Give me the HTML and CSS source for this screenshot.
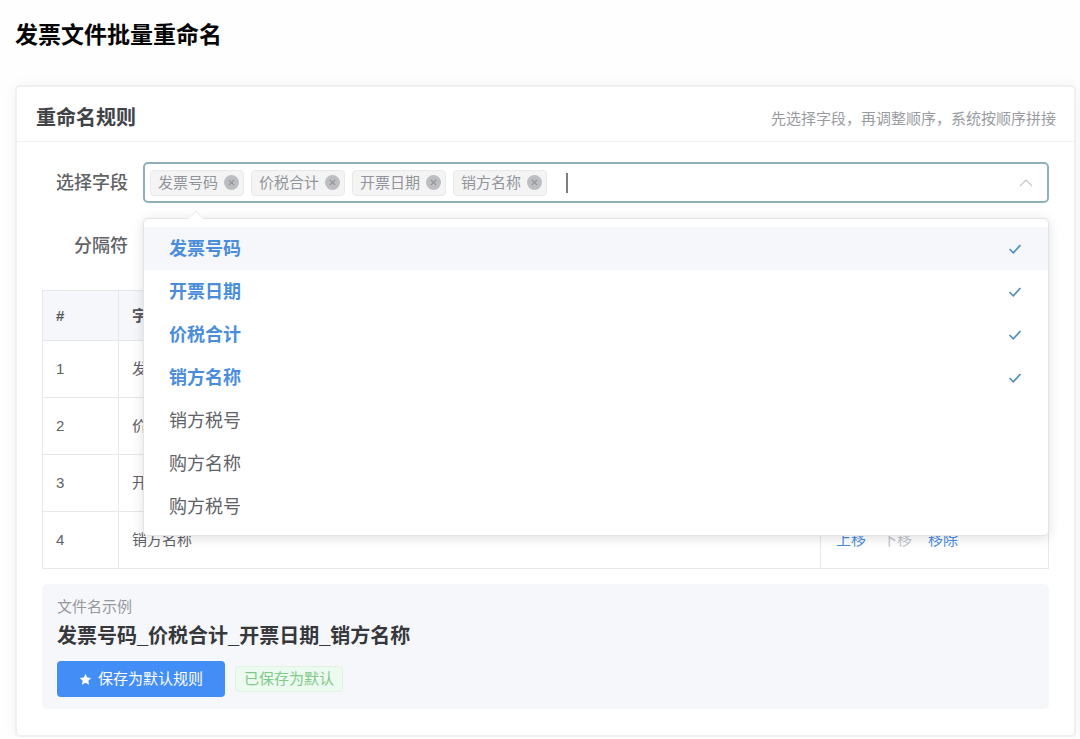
FILE: index.html
```html
<!DOCTYPE html>
<html lang="zh-CN">
<head>
<meta charset="utf-8">
<meta name="viewport" content="width=device-width, initial-scale=1">
<title>发票文件批量重命名</title>
<link rel="stylesheet" href="styles.css">
</head>
<body>
<main class="page">
  <h1 class="page-title">发票文件批量重命名</h1>
  <section class="card">
    <header class="card-header">
      <h2 class="card-title">重命名规则</h2>
      <p class="card-hint">先选择字段，再调整顺序，系统按顺序拼接</p>
    </header>
    <div class="card-body">
      <div class="form-row">
        <label class="form-label" for="fields">选择字段</label>
        <div class="field">
          <div class="select">
            <span class="tag">发票号码<button class="tag-close" type="button"><svg viewBox="0 0 14 14"><path d="M4.5 4.5l5 5M9.5 4.5l-5 5"/></svg></button></span>
            <span class="tag">价税合计<button class="tag-close" type="button"><svg viewBox="0 0 14 14"><path d="M4.5 4.5l5 5M9.5 4.5l-5 5"/></svg></button></span>
            <span class="tag">开票日期<button class="tag-close" type="button"><svg viewBox="0 0 14 14"><path d="M4.5 4.5l5 5M9.5 4.5l-5 5"/></svg></button></span>
            <span class="tag">销方名称<button class="tag-close" type="button"><svg viewBox="0 0 14 14"><path d="M4.5 4.5l5 5M9.5 4.5l-5 5"/></svg></button></span>
            <span class="caret"></span>
            <input class="select-input" id="fields" type="text" autocomplete="off">
            <svg class="chevron" viewBox="0 0 14 8"><path d="M1 7l6-6 6 6"/></svg>
          </div>
          <div class="dropdown">
            <ul class="options">
              <li class="option selected active">发票号码<svg class="check" viewBox="0 0 14 12"><path d="M1.5 6l3.8 3.8L12.5 2"/></svg></li>
              <li class="option selected">开票日期<svg class="check" viewBox="0 0 14 12"><path d="M1.5 6l3.8 3.8L12.5 2"/></svg></li>
              <li class="option selected">价税合计<svg class="check" viewBox="0 0 14 12"><path d="M1.5 6l3.8 3.8L12.5 2"/></svg></li>
              <li class="option selected">销方名称<svg class="check" viewBox="0 0 14 12"><path d="M1.5 6l3.8 3.8L12.5 2"/></svg></li>
              <li class="option">销方税号</li>
              <li class="option">购方名称</li>
              <li class="option">购方税号</li>
            </ul>
          </div>
        </div>
      </div>
      <div class="form-row">
        <label class="form-label" for="separator">分隔符</label>
        <div class="field"><input class="text-input" id="separator" type="text"></div>
      </div>
      <table class="table">
        <colgroup><col class="col-index"><col><col class="col-actions"></colgroup>
        <thead>
          <tr><th>#</th><th>字段</th><th></th></tr>
        </thead>
        <tbody>
          <tr><td>1</td><td>发票号码</td><td></td></tr>
          <tr><td>2</td><td>价税合计</td><td></td></tr>
          <tr><td>3</td><td>开票日期</td><td></td></tr>
          <tr><td>4</td><td>销方名称</td><td><div class="actions"><button class="link" type="button">上移</button><button class="link" type="button" disabled>下移</button><button class="link" type="button">移除</button></div></td></tr>
        </tbody>
      </table>
      <div class="preview">
        <p class="preview-label">文件名示例</p>
        <p class="preview-name">发票号码_价税合计_开票日期_销方名称</p>
        <div class="preview-actions">
          <button class="save" type="button"><svg class="star" viewBox="0 0 24 24"><path d="M12 1.5l3.2 6.8 7.4.9-5.4 5.1 1.4 7.4L12 18.1l-6.6 3.6 1.4-7.4L1.4 9.2l7.4-.9z"/></svg>保存为默认规则</button>
          <span class="status">已保存为默认</span>
        </div>
      </div>
    </div>
  </section>
</main>
</body>
</html>
```
FILE: styles.css
```css
* { box-sizing: border-box; }

body {
  margin: 0;
  background: #fefefe;
  color: #606266;
  font-family: "Liberation Sans", "Noto Sans CJK SC", sans-serif;
  font-size: 15px;
  line-height: 24px;
}

h1, h2, p, ul { margin: 0; padding: 0; }

button, input { font: inherit; color: inherit; }

button { border: 0; padding: 0; background: none; }

.page { padding: 19px 4px 0 15px; }

.page-title {
  margin-bottom: 34px;
  color: #060606;
  font-size: 23px;
  line-height: 32px;
  font-weight: 700;
}

.card {
  background: #fff;
  border: 2px solid #eef0f1;
  border-radius: 5px;
  box-shadow: 0 0 14px rgba(0, 0, 0, 0.05);
}

.card-header {
  display: flex;
  justify-content: space-between;
  align-items: center;
  padding: 18px 18px 9px 19px;
  border-bottom: 1px solid #f0f1f3;
}

.card-title {
  color: #414347;
  font-size: 20px;
  line-height: 27px;
  font-weight: 700;
}

.card-hint { color: #999b9f; }

.card-body { padding: 20px 25px 26px; }

.form-row {
  display: flex;
  align-items: center;
  gap: 15px;
  margin-bottom: 22px;
}

.form-label {
  width: 86px;
  text-align: right;
  font-size: 18px;
  font-weight: 500;
}

.field { position: relative; flex: 1; }

.select {
  display: flex;
  align-items: center;
  gap: 7px;
  height: 41px;
  padding: 0 14px 0 5px;
  border: 2px solid #8fb0bb;
  border-radius: 5px;
  background: #fff;
}

.tag {
  display: flex;
  align-items: center;
  gap: 6px;
  height: 26px;
  padding: 0 4px 0 7px;
  border: 1px solid #e9e9eb;
  border-radius: 4px;
  background: #f4f4f5;
  color: #929499;
}

.tag-close {
  display: flex;
  width: 15px;
  height: 15px;
  border-radius: 50%;
  background: #bcbec2;
}

.tag-close svg { width: 15px; height: 15px; fill: none; stroke: #909296; }

.caret { width: 2px; height: 20px; margin-left: 12px; background: #7c7e82; }

.select-input {
  flex: 1;
  min-width: 0;
  border: 0;
  outline: 0;
  background: none;
}

.chevron { width: 14px; height: 8px; fill: none; stroke: #c0c4cc; stroke-width: 1.2; }

.dropdown {
  position: absolute;
  z-index: 2;
  top: 56px;
  left: 0;
  right: 0;
  padding: 8px 0 7px;
  border: 1px solid #e2e4e8;
  border-radius: 5px;
  background: #fff;
  box-shadow: 0 2px 12px rgba(0, 0, 0, 0.13);
}

.dropdown::before {
  content: "";
  position: absolute;
  top: -6px;
  left: 46px;
  width: 11px;
  height: 11px;
  border: 1px solid #eceef1;
  border-right: 0;
  border-bottom: 0;
  background: #fff;
  transform: rotate(45deg);
}

.options { position: relative; list-style: none; }

.option {
  display: flex;
  align-items: center;
  justify-content: space-between;
  height: 43px;
  padding: 0 26px 0 25px;
  font-size: 18px;
}

.option.selected { color: #4a8ddb; font-weight: 700; }

.option.active { background: #f5f7fa; }

.check { width: 14px; height: 12px; fill: none; stroke: #528fba; stroke-width: 1.7; }

.text-input {
  display: block;
  width: 100%;
  height: 41px;
  border: 1px solid #dcdfe6;
  border-radius: 5px;
}

.table {
  width: 100%;
  margin-top: 24px;
  border-collapse: collapse;
  table-layout: fixed;
}

.col-index { width: 76px; }

.col-actions { width: 228px; }

.table th, .table td {
  height: 57px;
  padding: 0 13px;
  border: 1px solid #e6e8ec;
  text-align: left;
}

.table th {
  height: 50px;
  background: #f5f7fa;
  color: #56585d;
  font-weight: 700;
}

.actions { display: flex; gap: 16px; padding-left: 2px; }

.link { color: #4a8ddb; }

.link:disabled { color: #c0c4cc; }

.preview {
  margin-top: 15px;
  padding: 11px 15px 12px;
  border-radius: 5px;
  background: #f5f7fa;
}

.preview-label { color: #96989d; }

.preview-name {
  color: #36383c;
  font-size: 20px;
  line-height: 34px;
  font-weight: 700;
}

.preview-actions { display: flex; align-items: center; gap: 10px; margin-top: 8px; }

.save {
  display: flex;
  align-items: center;
  gap: 6px;
  height: 36px;
  padding: 0 22px;
  border-radius: 4px;
  background: #438df7;
  color: #fff;
}

.star { width: 13px; height: 13px; fill: #fff; }

.status {
  height: 26px;
  padding: 0 8px;
  border: 1px solid #e1f3e0;
  border-radius: 4px;
  background: #edfaef;
  color: #80c98a;
}
```
